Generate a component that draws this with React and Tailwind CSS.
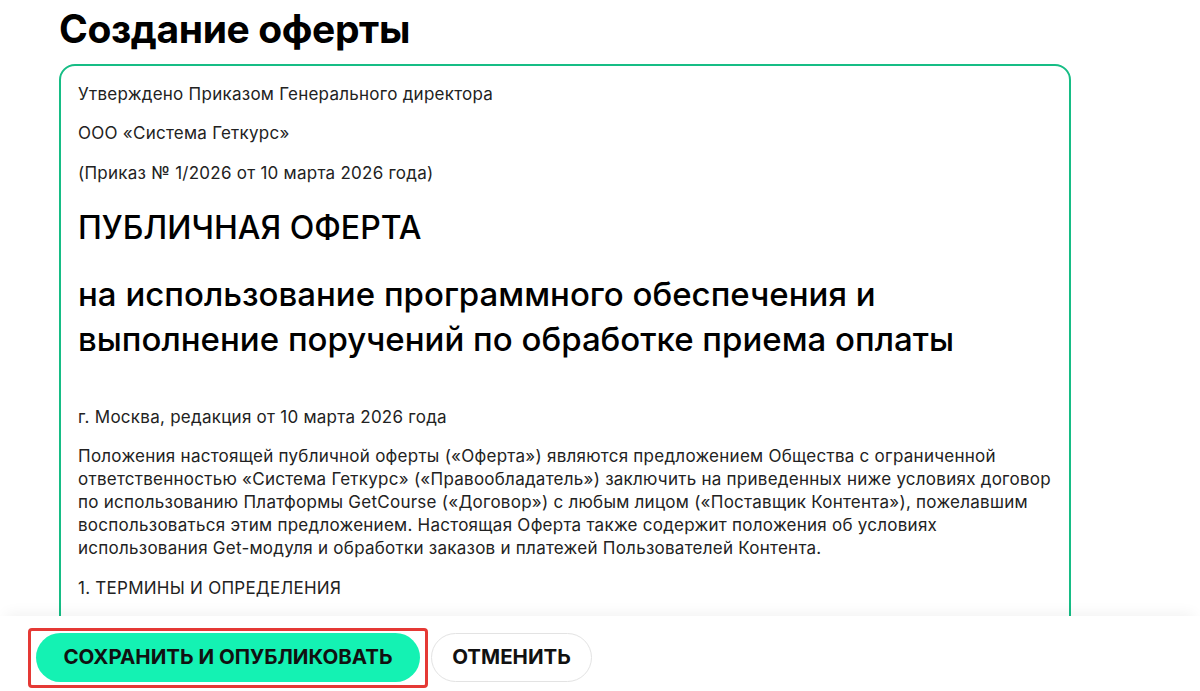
import React from "react";

// Offer editor: document preview in a bordered frame, sticky action bar below.
const text = "font-['Inter',sans-serif] text-[17px] tracking-[0.015em] text-[#222]";
const body = `${text} leading-[24px]`;

export default function App() {
  return (
    <div className="flex h-[691px] flex-col bg-white font-['Inter',sans-serif]">
      <div className="min-h-0 flex-1 overflow-hidden px-[59px]">
        <h1 className="pt-[5px] text-[39px] font-bold leading-[48px] tracking-[-0.01em] text-black">
          Создание оферты
        </h1>
        <div className="mt-[11px] w-[1012px] rounded-[16px] border-2 border-[#16bd85] pt-[16px] pr-[6px] pb-[80px] pl-[17px]">
          <p className={body}>Утверждено Приказом Генерального директора</p>
          <p className={`${body} mt-[15px]`}>ООО «Система Геткурс»</p>
          <p className={`${body} mt-[16px]`}>(Приказ № 1/2026 от 10 марта 2026 года)</p>
          <h2 className="mt-[23px] text-[32px] font-medium leading-[40px] text-black">
            ПУБЛИЧНАЯ ОФЕРТА
          </h2>
          <h3 className="mt-[24px] text-[33px] font-medium leading-[45px] text-black">
            на использование программного обеспечения и<br />
            выполнение поручений по обработке приема оплаты
          </h3>
          <p className={`${body} mt-[43px]`}>г. Москва, редакция от 10 марта 2026 года</p>
          <p className={`${text} mt-[16px] whitespace-nowrap leading-[23px]`}>
            Положения настоящей публичной оферты («Оферта») являются предложением Общества с ограниченной<br />
            ответственностью «Система Геткурс» («Правообладатель») заключить на приведенных ниже условиях договор<br />
            по использованию Платформы GetCourse («Договор») с любым лицом («Поставщик Контента»), пожелавшим<br />
            воспользоваться этим предложением. Настоящая Оферта также содержит положения об условиях<br />
            использования Get-модуля и обработки заказов и платежей Пользователей Контента.
          </p>
          <p className={`${body} mt-[16px]`}>1. ТЕРМИНЫ И ОПРЕДЕЛЕНИЯ</p>
        </div>
      </div>

      <div className="flex h-[75px] shrink-0 items-start gap-[3px] bg-white pt-[12px] pl-[28px] shadow-[0_-8px_14px_-6px_rgba(0,0,0,0.06)]">
        <div className="rounded-[4px] border-[3px] border-[#e53935] px-[5px] pt-[2px] pb-[3px]">
          <button
            type="button"
            className="flex h-[49px] w-[384px] items-center justify-center rounded-full bg-[#14f2b3] text-[20.5px] font-bold text-[#111]"
          >
            СОХРАНИТЬ И ОПУБЛИКОВАТЬ
          </button>
        </div>
        <button
          type="button"
          className="mt-[5px] flex h-[49px] w-[161px] items-center justify-center rounded-full border border-[#e3e3e3] bg-white text-[20.5px] font-bold text-[#111]"
        >
          ОТМЕНИТЬ
        </button>
      </div>
    </div>
  );
}
